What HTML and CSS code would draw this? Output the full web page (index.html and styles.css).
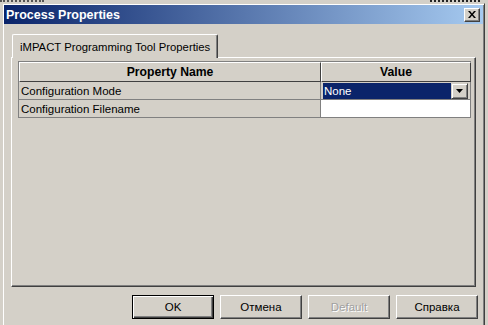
FILE: index.html
```html
<!DOCTYPE html>
<html lang="ru">
<head>
  <meta charset="UTF-8">
  <title>Process Properties</title>
  <link rel="stylesheet" href="styles.css">
</head>
<body>

  <div class="behind">
    <span class="behind-left"></span>
    <span class="behind-right"></span>
  </div>

  <div class="dialog">
    <div class="titlebar">
      <span class="title">Process Properties</span>
      <span class="close">
        <svg width="8" height="7" viewBox="0 0 8 7">
          <path d="M0 0h2l2 2.5L6 0h2L5 3.5 8 7H6L4 4.5 2 7H0l3-3.5z" fill="#000"/>
        </svg>
      </span>
    </div>

    <div class="content">
      <div class="tabs">
        <div class="tab">iMPACT Programming Tool Properties</div>
      </div>

      <div class="panel">
        <div class="grid">
          <div class="head">Property Name</div>
          <div class="head">Value</div>

          <div class="cell">Configuration Mode</div>
          <div class="cell value">
            <div class="combo">
              <span class="combo-text">None</span>
              <span class="combo-btn">
                <svg width="7" height="4" viewBox="0 0 7 4"><path d="M0 0h7L3.5 4z" fill="#000"/></svg>
              </span>
            </div>
          </div>

          <div class="cell">Configuration Filename</div>
          <div class="cell value white"></div>
        </div>
      </div>

      <div class="buttons">
        <button class="btn default">OK</button>
        <button class="btn">Отмена</button>
        <button class="btn" disabled>Default</button>
        <button class="btn">Справка</button>
      </div>
    </div>
  </div>

</body>
</html>
```

FILE: styles.css
```css
body { margin: 0; background: #d4d0c8; font-family: "Liberation Sans", Arial, sans-serif; font-size: 11.5px; color: #000; overflow: hidden; }

.behind { height: 3px; display: flex; justify-content: space-between; }
.behind-left { width: 44px; height: 2px; border-top: 2px dotted #555; }
.behind-right { width: 50px; height: 2px; margin-right: 8px; border-top: 2px dotted #222; }

.dialog { margin-left: 2px; width: 479px; padding: 1px; border: 1px solid; border-color: #d4d0c8 #404040 #404040 #d4d0c8; box-shadow: inset 1px 1px 0 #fff, inset -1px -1px 0 #808080; height: 330px; }

.titlebar { height: 19px; display: flex; align-items: center; justify-content: space-between; padding: 0 3px 0 2px; background: linear-gradient(to right, #0a246a, #a6caf0); }
.title { color: #fff; font-weight: bold; font-size: 12.5px; }
.close { width: 16px; height: 14px; box-sizing: border-box; display: flex; align-items: center; justify-content: center; background: #d4d0c8; border: 1px solid; border-color: #fff #404040 #404040 #fff; box-shadow: inset -1px -1px 0 #808080; }

.content { padding: 9px 5px 0 7px; }

.tabs { display: flex; padding-left: 1px; }
.tab { height: 23px; padding: 0 7px; display: flex; align-items: center; font-size: 11.3px; border: 1px solid; border-bottom: 0; border-color: #fff #404040 #fff #fff; box-shadow: inset -1px 0 0 #808080; border-radius: 2px 2px 0 0; position: relative; top: 1px; background: #d4d0c8; z-index: 1; }

.panel { height: 222px; padding: 3px 6px; border: 1px solid; border-color: #fff #404040 #404040 #fff; box-shadow: inset -1px -1px 0 #808080; box-sizing: content-box; width: 451px; }

.grid { display: grid; grid-template-columns: 302px 150px; border-left: 1px solid #808080; border-top: 1px solid #808080; width: 452px; }
.head { height: 18px; display: flex; align-items: center; justify-content: center; font-weight: bold; font-size: 12.2px; border: 1px solid; border-color: #fff #404040 #404040 #fff; }
.cell { height: 17px; display: flex; align-items: center; padding-left: 2px; border-right: 1px solid #808080; border-bottom: 1px solid #808080; box-sizing: border-box; height: 18px; }
.value { padding: 1px 2px 1px 2px; }
.white { background: #fff; }

.combo { flex: 1; height: 16px; display: flex; }
.combo-text { flex: 1; background: #0a246a; color: #fff; display: flex; align-items: center; padding-left: 1px; }
.combo-btn { width: 17px; box-sizing: border-box; display: flex; align-items: center; justify-content: center; background: #d4d0c8; border: 1px solid; border-color: #d4d0c8 #404040 #404040 #d4d0c8; box-shadow: inset 1px 1px 0 #fff, inset -1px -1px 0 #808080; }

.buttons { display: flex; justify-content: flex-end; gap: 6px; margin-top: 8px; padding-right: 0; width: 467px; }
.btn { width: 82px; height: 24px; padding: 0; font-family: inherit; font-size: 11.5px; color: #000; background: #d4d0c8; border: 1px solid; border-color: #fff #404040 #404040 #fff; box-shadow: inset -1px -1px 0 #808080; border-radius: 0; }
.btn.default { border: 1px solid #000; box-shadow: inset 1px 1px 0 #fff, inset -1px -1px 0 #404040, inset -2px -2px 0 #808080; }
.btn:disabled { color: #a0a0a0; text-shadow: 1px 1px 0 #fff; }
```
